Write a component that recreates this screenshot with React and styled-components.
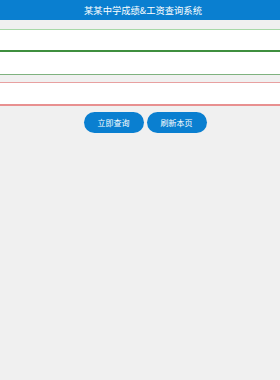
import React from "react";
import styled, { createGlobalStyle } from "styled-components";

const GlobalStyle = createGlobalStyle`
  html, body {
    margin: 0;
    padding: 0;
    background: #f0f0f0;
    font-family: "Noto Sans CJK SC", "Liberation Sans", sans-serif;
  }
`;

const Header = styled.div`
  height: 20px;
  padding-left: 6px;
  background: #0a7fd0;
  color: #fff;
  font-size: 9.3px;
  line-height: 20px;
  text-align: center;
`;

const Form = styled.div`
  padding-top: 9px;
`;

const Field = styled.input`
  display: block;
  box-sizing: border-box;
  width: 100%;
  height: ${({ h }) => h}px;
  margin: 0 0 ${({ gap }) => gap || 0}px;
  padding: 0 6px;
  border: none;
  border-top: ${({ top }) => (top ? `1px solid ${top}` : "none")};
  border-bottom: ${({ bottomW }) => bottomW || 1}px solid ${({ bottom }) => bottom};
  background: #fff;
  outline: none;
  font-size: 10px;
`;

const Actions = styled.div`
  display: flex;
  justify-content: center;
  gap: 3px;
  padding: 6px 0 0 10px;
`;

const Button = styled.button`
  width: 60px;
  height: 21px;
  border: none;
  border-radius: 11px;
  background: #0a7fd0;
  color: #fff;
  font-family: inherit;
  font-size: 8px;
  padding: 0;
  cursor: pointer;
`;

export default function App() {
  return (
    <>
      <GlobalStyle />
      <Header>某某中学成绩&amp;工资查询系统</Header>
      <Form>
        <Field h={23} top="#a8d8a8" bottom="#3f8f3f" bottomW={2} />
        <Field h={23} bottom="#7fb27f" gap={7} />
        <Field h={24} top="#e8a0a0" bottom="#e89090" bottomW={2} />
      </Form>
      <Actions>
        <Button>立即查询</Button>
        <Button>刷新本页</Button>
      </Actions>
    </>
  );
}
